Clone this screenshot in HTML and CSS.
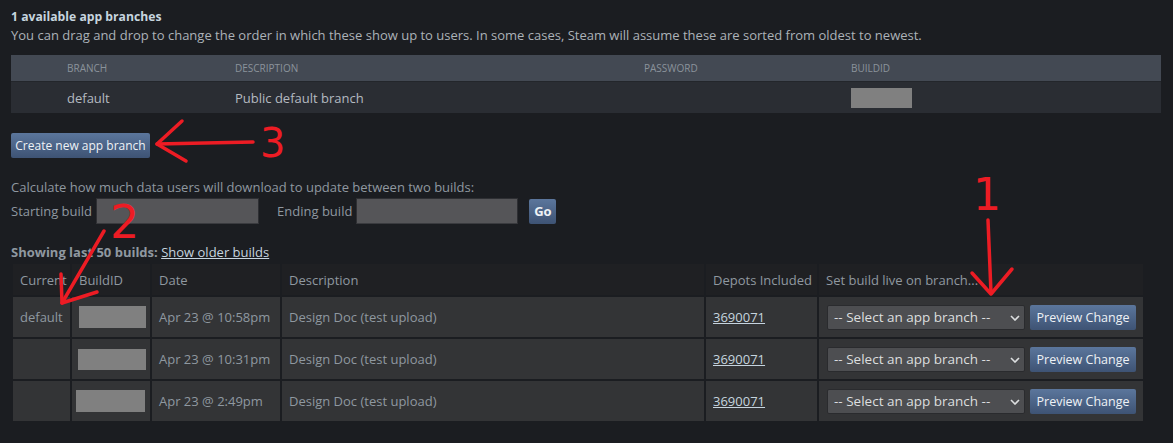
FILE: index.html
```html
<!DOCTYPE html>
<html lang="en">
<head>
<meta charset="utf-8">
<title>App branches</title>
<link rel="stylesheet" href="styles.css">
</head>
<body>
<div class="page">
  <h2 class="title">1 available app branches</h2>
  <p class="note">You can drag and drop to change the order in which these show up to users. In some cases, Steam will assume these are sorted from oldest to newest.</p>

  <div class="branches">
    <div class="bhead">
      <span>Branch</span><span>Description</span><span>Password</span><span>BuildID</span>
    </div>
    <div class="brow">
      <span>default</span><span>Public default branch</span><span></span><span><i class="redact redact-branch"></i></span>
    </div>
  </div>

  <button class="btn create">Create new app branch</button>

  <p class="calc">Calculate how much data users will download to update between two builds:</p>
  <div class="diffrow">
    <label class="lbl">Starting build</label>
    <input class="field field-start" type="text">
    <label class="lbl lbl-end">Ending build</label>
    <input class="field field-end" type="text">
    <button class="btn go">Go</button>
  </div>

  <p class="showing"><b>Showing last 50 builds:</b> <a class="older" href="#">Show older builds</a></p>

  <div class="builds">
    <div class="th">Current</div>
    <div class="th">BuildID</div>
    <div class="th">Date</div>
    <div class="th">Description</div>
    <div class="th">Depots Included</div>
    <div class="th">Set build live on branch...</div>

    <div class="td">default</div>
    <div class="td"><i class="redact redact-b1"></i></div>
    <div class="td">Apr 23 @ 10:58pm</div>
    <div class="td">Design Doc (test upload)</div>
    <div class="td"><a class="depot" href="#">3690071</a></div>
    <div class="td live">
      <div class="selwrap"><select class="sel"><option>-- Select an app branch --</option></select>
        <svg class="chev" viewBox="0 0 10 6" width="10" height="6"><path d="M1 1l4 4 4-4" fill="none" stroke="#dcdedf" stroke-width="1.6"/></svg></div>
      <button class="btn preview">Preview Change</button>
    </div>

    <div class="td"></div>
    <div class="td"><i class="redact redact-b2"></i></div>
    <div class="td">Apr 23 @ 10:31pm</div>
    <div class="td">Design Doc (test upload)</div>
    <div class="td"><a class="depot" href="#">3690071</a></div>
    <div class="td live">
      <div class="selwrap"><select class="sel"><option>-- Select an app branch --</option></select>
        <svg class="chev" viewBox="0 0 10 6" width="10" height="6"><path d="M1 1l4 4 4-4" fill="none" stroke="#dcdedf" stroke-width="1.6"/></svg></div>
      <button class="btn preview">Preview Change</button>
    </div>

    <div class="td"></div>
    <div class="td"><i class="redact redact-b3"></i></div>
    <div class="td">Apr 23 @ 2:49pm</div>
    <div class="td">Design Doc (test upload)</div>
    <div class="td"><a class="depot" href="#">3690071</a></div>
    <div class="td live">
      <div class="selwrap"><select class="sel"><option>-- Select an app branch --</option></select>
        <svg class="chev" viewBox="0 0 10 6" width="10" height="6"><path d="M1 1l4 4 4-4" fill="none" stroke="#dcdedf" stroke-width="1.6"/></svg></div>
      <button class="btn preview">Preview Change</button>
    </div>
  </div>

  <svg class="annot" width="1173" height="443" viewBox="0 0 1173 443">
    <g fill="none" stroke="#ed1c24" stroke-width="3.5" stroke-linecap="round" stroke-linejoin="round">
      <path d="M253 142 L157 144"/>
      <path d="M182 121 L157 144 L186 161"/>
      <path d="M104 231 L62 303"/>
      <path d="M61 274 L62 303 L97 292"/>
      <path d="M988 220 L991 293"/>
      <path d="M972 273 L991 294 L1012 269"/>
    </g>
    <g class="nums" fill="#ed1c24">
      <text x="260" y="157" class="n3">3</text>
      <text x="110" y="238" class="n2">2</text>
      <text x="973" y="210" class="n1">1</text>
    </g>
  </svg>
</div>
</body>
</html>
```

FILE: styles.css
```css
* { box-sizing: border-box; }

html, body {
  margin: 0;
  padding: 0;
  background: #1b1d21;
}

body {
  font-family: "Open Sans", "Liberation Sans", Arial, sans-serif;
  font-size: 13px;
  color: #acb2b8;
  width: 1173px;
  height: 443px;
  overflow: hidden;
}

.page {
  position: relative;
  padding: 8px 11px 0 11px;
}

.title {
  margin: 0;
  font-size: 12.2px;
  line-height: 18px;
  font-weight: bold;
  color: #c6d4df;
}

.note {
  margin: 0;
  line-height: 18px;
  color: #acb2b8;
}

/* branch table */
.branches {
  margin-top: 11px;
  width: 1150px;
}

.bhead,
.brow {
  display: grid;
  grid-template-columns: 168px 409px 207px 1fr;
  padding-left: 56px;
  align-items: center;
}

.bhead {
  height: 27px;
  background: #434953;
  border-bottom: 1px solid #23262b;
  font-size: 10px;
  text-transform: uppercase;
  color: #8b939b;
}

.brow {
  height: 31px;
  background: #2a2d33;
  color: #b4bac0;
}

.redact {
  display: block;
  background: #808080;
}

.redact-branch { width: 61px; height: 20px; }

/* buttons */
.btn {
  font-family: inherit;
  border: none;
  border-radius: 2px;
  color: #eef2f6;
  background: linear-gradient(to bottom, #5b769c 0%, #3e5374 100%);
  padding: 0;
  cursor: pointer;
}

.create {
  display: block;
  margin-top: 20px;
  width: 139px;
  height: 25px;
  font-size: 12px;
}

.calc {
  margin: 20px 0 0 0;
  line-height: 18px;
  color: #8f98a0;
}

.diffrow {
  margin-top: 2px;
  display: flex;
  align-items: center;
  height: 26px;
  color: #8f98a0;
}

.lbl { margin-right: 4px; }
.lbl-end { margin-left: 18px; }

.field {
  height: 26px;
  background: #555558;
  border: 1px solid #2e2f33;
  border-bottom-color: #3a3b3f;
  padding: 0;
}

.field-start { width: 163px; }
.field-end { width: 162px; }

.go {
  margin-left: 11px;
  width: 27px;
  height: 25px;
  font-size: 13px;
  font-weight: bold;
}

.showing {
  margin: 19px 0 0 0;
  line-height: 18px;
  color: #8f98a0;
}

.older {
  color: #c6d4df;
  text-decoration: underline;
}

/* builds table */
.builds {
  margin-top: 1px;
  display: grid;
  grid-template-columns: 57px 78px 128px 422px 111px 324px;
  grid-template-rows: 31px repeat(3, 40px);
  gap: 2px;
  padding: 2px;
  width: 1134px;
}

.th,
.td {
  display: flex;
  align-items: center;
  padding-left: 7px;
  color: #8f98a0;
  white-space: nowrap;
  overflow: hidden;
}

.th {
  background: #1f2023;
  padding-top: 1px;
}

.td {
  background: #333436;
}

.redact-b1 { width: 67px; height: 22px; }
.redact-b2 { width: 68px; height: 21px; margin-left: -1px; }
.redact-b3 { width: 69px; height: 22px; margin-left: -3px; }

.depot {
  color: #c6d4df;
  text-decoration: underline;
}

.live { padding-left: 8px; gap: 5px; }

.selwrap {
  position: relative;
  width: 198px;
  height: 25px;
}

.sel {
  appearance: none;
  -webkit-appearance: none;
  width: 198px;
  height: 25px;
  background: #4d4e51;
  border: 1px solid #2a2b2e;
  border-radius: 2px;
  color: #dcdedf;
  font-family: inherit;
  font-size: 13.5px;
  padding: 0 0 0 6px;
}

.chev {
  position: absolute;
  right: 5px;
  top: 10px;
  pointer-events: none;
}

.preview {
  width: 106px;
  height: 25px;
  font-size: 12.5px;
}

/* annotations overlay */
.annot {
  position: absolute;
  left: 0;
  top: 0;
  pointer-events: none;
}

.nums text {
  font-family: "DejaVu Sans", sans-serif;
}

.n3 { font-size: 40px; }
.n2 { font-size: 46px; }
.n1 { font-size: 44px; }
```
